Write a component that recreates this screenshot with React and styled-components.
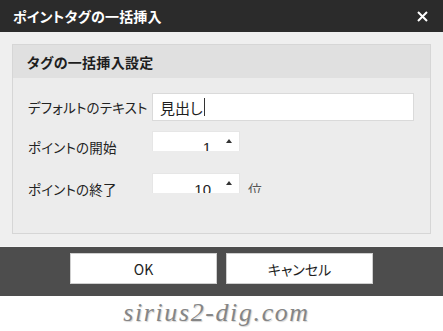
import React from "react";
import styled, { createGlobalStyle } from "styled-components";

const Global = createGlobalStyle`
  html, body { margin: 0; padding: 0; background: #ffffff; }
  body { font-family: "Noto Sans CJK JP", "Noto Sans", sans-serif; }
  * { box-sizing: border-box; }
`;

const Dialog = styled.div`
  width: 443px;
  height: 331px;
  display: flex;
  flex-direction: column;
  background: #ffffff;
  font-feature-settings: "palt";
`;

const TitleBar = styled.div`
  height: 32px;
  background: #2b2b2b;
  display: flex;
  align-items: center;
  justify-content: space-between;
  padding: 0 15px 0 13px;
`;

const Title = styled.div`
  color: #ffffff;
  font-size: 14px;
  font-weight: 700;
  letter-spacing: 0.2px;
`;

const CloseIcon = styled.svg`
  width: 11px;
  height: 11px;
  display: block;
`;

const Body = styled.div`
  height: 214px;
  background: #efefef;
  padding: 12px 12px 12px;
`;

const Panel = styled.div`
  height: 190px;
  border: 1px solid #d6d6d6;
  background: #ececec;
`;

const PanelHeader = styled.div`
  height: 33px;
  background: #e0e0e0;
  display: flex;
  align-items: center;
  padding-left: 14px;
  font-size: 14px;
  font-weight: 700;
  color: #1e1e1e;
  letter-spacing: 0.3px;
`;

const Rows = styled.div`
  display: flex;
  flex-direction: column;
  gap: 10px;
  padding: 15px 0 0 15px;
`;

const Row = styled.div`
  display: flex;
  align-items: center;
  height: ${(p) => p.$h}px;
`;

const Label = styled.div`
  width: 124px;
  font-size: 13.5px;
  color: #222222;
  letter-spacing: 0.2px;
  align-self: center;
`;

const TextField = styled.div`
  width: 262px;
  height: 28px;
  background: #ffffff;
  border: 1px solid #dadada;
  display: flex;
  align-items: center;
  padding-left: 7px;
  font-size: 15px;
  color: #1e1e1e;
`;

const Caret = styled.span`
  display: inline-block;
  width: 1px;
  height: 18px;
  background: #333333;
  margin-left: 1px;
`;

const FieldClip = styled.div`
  align-self: flex-start;
  height: 20px;
  overflow: hidden;
  display: flex;
  align-items: flex-start;
`;

const NumberBox = styled.div`
  width: 88px;
  height: 32px;
  background: #ffffff;
  border: 1px solid #e6e6e6;
  position: relative;
  display: flex;
  align-items: center;
  justify-content: flex-end;
  padding-right: 28px;
  font-family: "Liberation Sans", Arial, sans-serif;
  font-size: 15px;
  color: #1e1e1e;
`;

const SpinUp = styled.span`
  position: absolute;
  right: 7px;
  top: 7px;
  width: 0;
  height: 0;
  border-left: 3.5px solid transparent;
  border-right: 3.5px solid transparent;
  border-bottom: 4px solid #333333;
`;

const Unit = styled.div`
  height: 32px;
  display: flex;
  align-items: center;
  margin-left: 8px;
  font-size: 14px;
  color: #555555;
`;

const Footer = styled.div`
  height: 50px;
  background: #4d4d4d;
  border-top: 1px solid #f4f4f4;
  display: flex;
  justify-content: center;
  align-items: flex-start;
  gap: 9px;
  padding-top: 6px;
`;

const Button = styled.button`
  width: 147px;
  height: 31px;
  background: #ffffff;
  border: 1px solid #cfcfcf;
  font-family: "Noto Sans CJK JP", "Noto Sans", sans-serif;
  font-feature-settings: "palt";
  font-size: 14px;
  color: #1e1e1e;
  padding: 0;
  cursor: pointer;
`;

const Watermark = styled.div`
  flex: 1;
  display: flex;
  justify-content: center;
  align-items: center;
  padding: 0 10px 2px 0;
  font-family: "Liberation Serif", "DejaVu Serif", serif;
  font-style: italic;
  font-size: 26px;
  color: #858585;
  text-shadow: 1px 1px 1px #d4d4d4;
  letter-spacing: 1.6px;
`;

function NumberRow({ label, value, unit }) {
  return (
    <Row $h={32}>
      <Label>{label}</Label>
      <FieldClip>
        <NumberBox>
          {value}
          <SpinUp />
        </NumberBox>
        {unit && <Unit>{unit}</Unit>}
      </FieldClip>
    </Row>
  );
}

export default function App() {
  return (
    <>
      <Global />
      <Dialog>
        <TitleBar>
          <Title>ポイントタグの一括挿入</Title>
          <CloseIcon viewBox="0 0 11 11">
            <path d="M1 1 L10 10 M10 1 L1 10" stroke="#ffffff" strokeWidth="2" />
          </CloseIcon>
        </TitleBar>
        <Body>
          <Panel>
            <PanelHeader>タグの一括挿入設定</PanelHeader>
            <Rows>
              <Row $h={28}>
                <Label>デフォルトのテキスト</Label>
                <TextField>
                  見出し
                  <Caret />
                </TextField>
              </Row>
              <NumberRow label="ポイントの開始" value="1" />
              <NumberRow label="ポイントの終了" value="10" unit="位" />
            </Rows>
          </Panel>
        </Body>
        <Footer>
          <Button>OK</Button>
          <Button>キャンセル</Button>
        </Footer>
        <Watermark>sirius2-dig.com</Watermark>
      </Dialog>
    </>
  );
}
